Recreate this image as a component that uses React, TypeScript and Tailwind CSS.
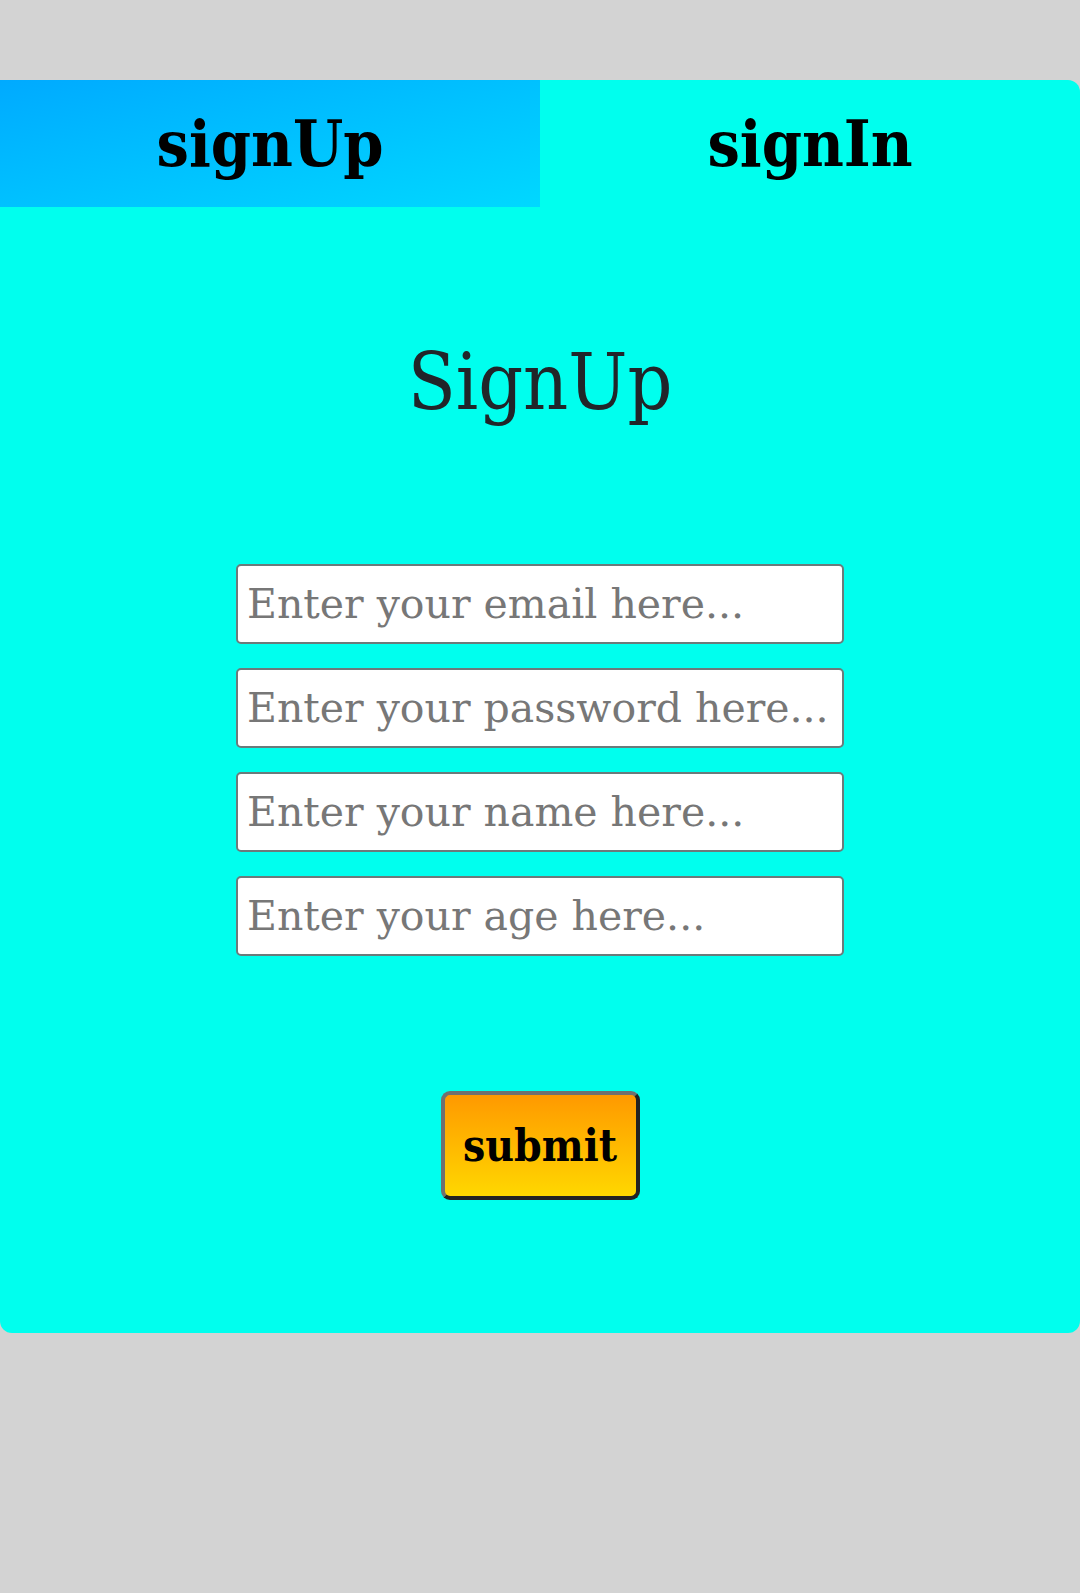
import React, { useState } from 'react';

const serif = "font-['DejaVu_Serif_Condensed','DejaVu_Serif',serif] font-stretch-condensed";

const fields = [
  { id: 'email', type: 'email', placeholder: 'Enter your email here...' },
  { id: 'password', type: 'password', placeholder: 'Enter your password here...' },
  { id: 'name', type: 'text', placeholder: 'Enter your name here...' },
  { id: 'age', type: 'number', placeholder: 'Enter your age here...' },
];

export default function App() {
  const [tab, setTab] = useState<'signUp' | 'signIn'>('signUp');

  return (
    <div className={`min-h-[1593px] bg-[#d3d3d3] pt-[80px] ${serif}`}>
      <div className="rounded-[12px] bg-[#00ffee]">
        {/* Tabs */}
        <div className="flex h-[127px]">
          <button
            onClick={() => setTab('signUp')}
            className={`flex-1 text-[64px] font-bold text-black ${
              tab === 'signUp' ? 'bg-gradient-to-br from-[#00aaff] to-[#00d8ff]' : ''
            }`}
          >
            signUp
          </button>
          <button
            onClick={() => setTab('signIn')}
            className={`flex-1 text-[64px] font-bold text-black ${
              tab === 'signIn' ? 'bg-gradient-to-br from-[#00aaff] to-[#00d8ff]' : ''
            }`}
          >
            signIn
          </button>
        </div>

        {/* Form */}
        <div className="flex flex-col items-center pt-[127px] pb-[133px]">
          <h1 className="text-[78px] leading-[96px] text-[#212529]">SignUp</h1>

          <div className="mt-[134px] flex flex-col gap-[24px]">
            {fields.map((f) => (
              <input
                key={f.id}
                type={f.type}
                placeholder={f.placeholder}
                className="h-[80px] w-[608px] rounded-[5px] border-2 border-[#6b7b7b] bg-white px-[9px] font-['DejaVu_Serif',serif] font-stretch-normal text-[41px] text-black placeholder:text-[#777777] outline-none"
              />
            ))}
          </div>

          <button className="mt-[135px] h-[109px] w-[199px] rounded-[9px] border-[4px] border-t-[#707070] border-l-[#707070] border-r-[#222222] border-b-[#222222] bg-gradient-to-b from-[#ff9900] to-[#ffd700] text-[44px] font-bold text-black">
            submit
          </button>
        </div>
      </div>
    </div>
  );
}
